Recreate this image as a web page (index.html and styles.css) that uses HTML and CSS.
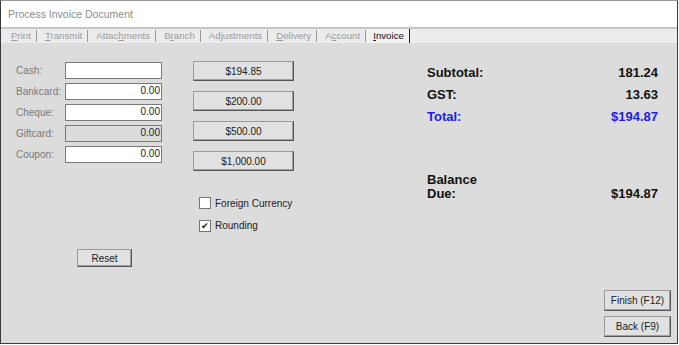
FILE: index.html
```
<!DOCTYPE html>
<html>
	<head>
		<meta charset="utf-8">
		<title>Process Invoice Document</title>
		<link rel="stylesheet" href="styles.css">
	</head>
	<body>
		<!-- 窗口 -->
		<div class="window">
			<div class="titlebar">Process Invoice Document</div>
			<!-- 选项卡 -->
			<div class="tabs">
				<span class="tab"><u>P</u>rint</span>
				<span class="tab"><u>T</u>ransmit</span>
				<span class="tab">Attac<u>h</u>ments</span>
				<span class="tab">B<u>r</u>anch</span>
				<span class="tab">Ad<u>j</u>ustments</span>
				<span class="tab"><u>D</u>elivery</span>
				<span class="tab">A<u>c</u>count</span>
				<span class="tab active"><u>I</u>nvoice</span>
			</div>
			<div class="content">
				<!-- 左侧: 付款方式 -->
				<div class="col-left">
					<div class="form">
						<label>Cash:</label>
						<div class="field"></div>
						<label>Bankcard:</label>
						<div class="field">0.00</div>
						<label>Cheque:</label>
						<div class="field">0.00</div>
						<label>Giftcard:</label>
						<div class="field disabled">0.00</div>
						<label>Coupon:</label>
						<div class="field">0.00</div>
					</div>
					<button class="btn reset">Reset</button>
				</div>
				<!-- 中间: 快捷金额 -->
				<div class="col-mid">
					<div class="amounts">
						<button class="btn amount">$194.85</button>
						<button class="btn amount">$200.00</button>
						<button class="btn amount">$500.00</button>
						<button class="btn amount">$1,000.00</button>
					</div>
					<div class="checks">
						<div class="check"><span class="box"></span>Foreign Currency</div>
						<div class="check"><span class="box">&#10004;</span>Rounding</div>
					</div>
				</div>
				<!-- 右侧: 合计 -->
				<div class="col-right">
					<div class="summary">
						<div class="row"><span>Subtotal:</span><span>181.24</span></div>
						<div class="row"><span>GST:</span><span>13.63</span></div>
						<div class="row total"><span>Total:</span><span>$194.87</span></div>
						<div class="balance"><span>Balance<br>Due:</span><span>$194.87</span></div>
					</div>
					<div class="actions">
						<button class="btn action">Finish (F12)</button>
						<button class="btn action">Back (F9)</button>
					</div>
				</div>
			</div>
		</div>
	</body>
</html>
```

FILE: styles.css
```
*{
	margin: 0px;padding: 0px;
	box-sizing: border-box;
}
body{
	font-family: "Liberation Sans", Arial, sans-serif;
	background-color: #fff;
}
.window{
	width: 678px;height: 344px;
	border: 1px solid #3a3a3a;
	border-top-color: #9a9a9a;
	display: flex;
	flex-direction: column;
}
/* 标题栏 高度含下边框 */
.titlebar{
	height: 28px;
	background-color: #fff;
	color: #8c8c8c;
	font-size: 10.5px;
	line-height: 27px;
	padding-left: 7px;
	border-bottom: 2px solid #c6c6c6;
	flex-shrink: 0;
}
/* 选项卡 */
.tabs{
	height: 14px;
	background-color: #ececec;
	display: flex;
	align-items: center;
	padding-left: 3px;
	font-size: 9.7px;
	color: #9a9a9a;
	flex-shrink: 0;
}
.tab{
	padding: 0 5px 0 7px;
	border-right: 1px solid #9a9a9a;
	line-height: 12px;
	margin-right: 1px;
}
.tab.active{
	color: #111;
	background-color: #f2f2f2;
	border-right-color: #222;
	line-height: 14px;
	padding-left: 6px;
}
.content{
	flex: 1;
	background-color: #dcdcdc;
	display: flex;
	padding: 18px 6px 6px 15px;
}
/* 左列 */
.col-left{
	width: 147px;
	display: flex;
	flex-direction: column;
	align-items: flex-start;
}
.form{
	display: grid;
	grid-template-columns: 49px 97px;
	row-gap: 4px;
	margin-top: 1px;
	font-size: 10px;
}
.form label{
	color: #7a7a7a;
	align-self: center;
}
.field{
	height: 17px;
	background-color: #fff;
	border: 1px solid #7a7a7a;
	text-align: right;
	padding-right: 1px;
	line-height: 13px;
	color: #222;
}
.field.disabled{
	background-color: #dcdcdc;
}
.btn{
	font-family: "Liberation Sans", Arial, sans-serif;
	font-size: 10px;
	color: #222;
	background-color: #e1e1e1;
	border: 1px solid #9a9a9a;
	border-right-color: #555;
	border-bottom-color: #555;
	box-shadow: inset -1px -1px 0 #a0a0a0;
}
.reset{
	width: 55px;height: 18px;
	margin: 86px 0 0 61px;
}
/* 中间列 */
.col-mid{
	width: 101px;
	margin-left: 30px;
	display: flex;
	flex-direction: column;
}
.amounts{
	display: flex;
	flex-direction: column;
	gap: 10px;
}
.amount{
	height: 20px;
}
.checks{
	margin: 21px 0 0 6px;
	font-size: 10px;
	color: #222;
}
.check{
	display: flex;
	align-items: center;
	height: 22.5px;
	white-space: nowrap;
}
.box{
	width: 12px;height: 12px;
	background-color: #fff;
	border: 1px solid #777;
	margin-right: 4px;
	font-size: 9px;
	line-height: 10px;
	text-align: center;
}
/* 右列 */
.col-right{
	flex: 1;
	display: flex;
	flex-direction: column;
	align-items: flex-end;
}
.summary{
	width: 231px;
	margin-right: 13px;
	font-size: 13px;
	font-weight: bold;
	color: #111;
}
.row{
	height: 22px;
	display: flex;
	justify-content: space-between;
	align-items: center;
}
.total{
	color: #1c1cf0;
}
.balance{
	margin-top: 46px;
	line-height: 14px;
	display: flex;
	justify-content: space-between;
	align-items: flex-end;
}
.actions{
	margin-top: auto;
	display: flex;
	flex-direction: column;
	gap: 5px;
}
.action{
	width: 67px;height: 21px;
}
```
